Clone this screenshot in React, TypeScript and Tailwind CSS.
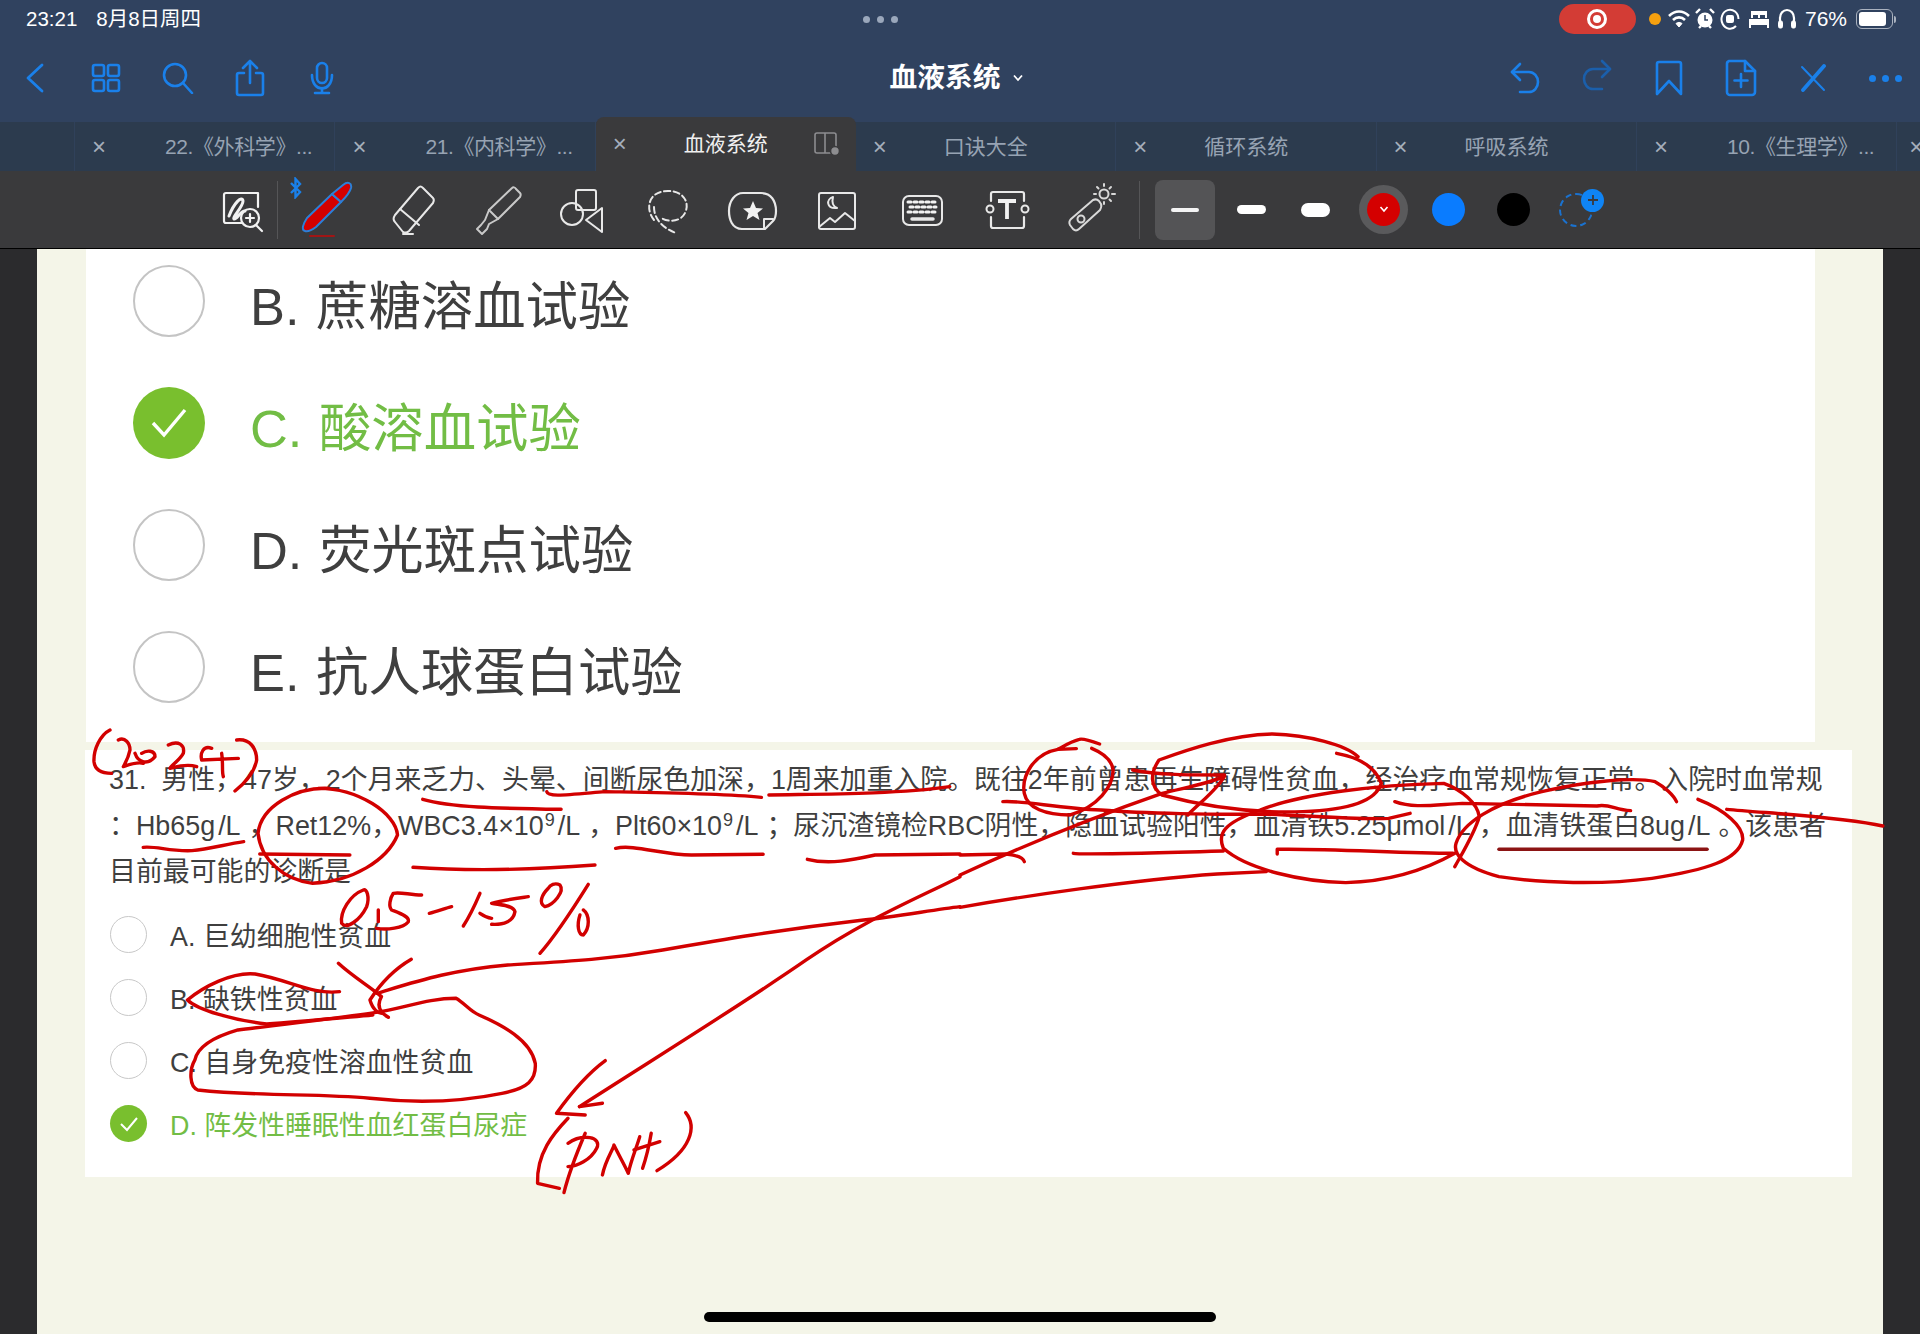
const font = "font-['Liberation_Sans','Noto_Sans_CJK_SC',sans-serif]";

const tabs = [
    { label: "22.《外科学》...", long: true },
    { label: "21.《内科学》...", long: true },
    { label: "血液系统", active: true },
    { label: "口诀大全" },
    { label: "循环系统" },
    { label: "呼吸系统" },
    { label: "10.《生理学》...", long: true },
];

const NavIcon = ({ w, h, children }: { w: number; h: number; children: React.ReactNode }) => (
    <div className="w-[72px] flex items-center justify-center">
        <svg width={w} height={h} viewBox={`0 0 ${w} ${h}`} fill="none" stroke="currentColor" strokeWidth="2.6" strokeLinecap="round" strokeLinejoin="round">
            {children}
        </svg>
    </div>
);

const ToolSlot = ({ children }: { children: React.ReactNode }) => (
    <div className="w-[85px] pt-[2px] flex items-center justify-center">
        <svg width="60" height="60" viewBox="0 0 60 60" fill="none" stroke="#e8e8e8" strokeWidth="2" strokeLinecap="round" strokeLinejoin="round">
            {children}
        </svg>
    </div>
);

const StatusBar = () => (
    <div className="h-[38px] flex items-center justify-between text-white text-[20.5px]">
        <div className="flex gap-[19px] pl-[26px]">
            <span>23:21</span>
            <span>8月8日周四</span>
        </div>
        <div className="flex gap-[7px]">
            <div className="w-[7px] h-[7px] rounded-full bg-[#9aa7bb]"></div>
            <div className="w-[7px] h-[7px] rounded-full bg-[#9aa7bb]"></div>
            <div className="w-[7px] h-[7px] rounded-full bg-[#9aa7bb]"></div>
        </div>
        <div className="flex items-center pr-[24px]">
            <div className="w-[77px] h-[30px] rounded-full bg-[#d33c35] flex items-center justify-center">
                <div className="w-[20px] h-[20px] rounded-full border-[3px] border-white flex items-center justify-center">
                    <div className="w-[8px] h-[8px] rounded-full bg-white"></div>
                </div>
            </div>
            <div className="w-[12px] h-[12px] rounded-full bg-[#f5a00f] ml-[13px]"></div>
            <svg className="ml-[6px]" width="24" height="20" viewBox="0 0 24 20" fill="none" stroke="white" strokeWidth="2.6">
                <path d="M2 7 C8 1,16 1,22 7" />
                <path d="M6 11 C9.5 7.5,14.5 7.5,18 11" />
                <path d="M12 18 L9 14.5 C11 13,13 13,15 14.5 Z" fill="white" strokeWidth="1" />
            </svg>
            <svg className="ml-[3px]" width="22" height="24" viewBox="0 0 22 24">
                <circle cx="11" cy="13" r="7.5" fill="white" />
                <path d="M2 6 L6 2 M20 6 L16 2 M5 21 L7 19 M17 21 L15 19" stroke="white" strokeWidth="2.4" />
                <path d="M11 8 V13 H14" stroke="#2f4260" strokeWidth="1.5" fill="none" />
            </svg>
            <svg className="ml-[4px]" width="20" height="24" viewBox="0 0 20 24" fill="none" stroke="white" strokeWidth="2">
                <path d="M16 19 A8.5 9.5 0 1 1 18.5 12" />
                <rect x="7" y="9" width="6" height="6" rx="1" fill="white" />
            </svg>
            <svg className="ml-[8px]" width="22" height="20" viewBox="0 0 22 20" fill="white">
                <path d="M3 2 H19 V9 H3 Z" />
                <path d="M1 10 H21 V16 H1 Z" />
                <path d="M1 16 H3 V19 H1 Z M19 16 H21 V19 H19 Z" />
                <path d="M5 6 H10 V9 H5 Z M12 6 H17 V9 H12 Z" fill="#2f4260" />
            </svg>
            <svg className="ml-[7px]" width="20" height="22" viewBox="0 0 20 22" fill="none" stroke="white" strokeWidth="2.2">
                <path d="M3 15 V10 A7 8 0 0 1 17 10 V15" />
                <rect x="1.5" y="13" width="4" height="7" rx="1.5" fill="white" strokeWidth="1" />
                <rect x="14.5" y="13" width="4" height="7" rx="1.5" fill="white" strokeWidth="1" />
            </svg>
            <span className="ml-[8px] text-[21px]">76%</span>
            <div className="ml-[9px] w-[37px] h-[20px] rounded-[6px] border border-[#aab2bf] p-[2px]">
                <div className="w-[27px] h-full rounded-[3px] bg-white"></div>
            </div>
            <div className="w-[2px] h-[7px] ml-[1px] rounded-r-full bg-[#aab2bf]"></div>
        </div>
    </div>
);

const NavBar = () => (
    <div className="h-[84px] pb-[4px] grid grid-cols-[1fr_auto_1fr] items-center text-[#1a80ea]">
        <div className="flex">
            <div className="w-[70px] flex items-center justify-center">
                <svg width="20" height="30" viewBox="0 0 20 30" fill="none" stroke="currentColor" strokeWidth="2.8" strokeLinecap="round" strokeLinejoin="round">
                    <path d="M17 2 L3 15 L17 28" />
                </svg>
            </div>
            <NavIcon w={30} h={30}>
                <rect x="2" y="2" width="11" height="11" rx="2" />
                <rect x="17" y="2" width="11" height="11" rx="2" />
                <rect x="2" y="17" width="11" height="11" rx="2" />
                <rect x="17" y="17" width="11" height="11" rx="2" />
            </NavIcon>
            <NavIcon w={32} h={32}>
                <circle cx="13" cy="13" r="11" />
                <path d="M21 21 L30 31" />
            </NavIcon>
            <NavIcon w={30} h={38}>
                <path d="M9 14 H4 A2 2 0 0 0 2 16 V34 A2 2 0 0 0 4 36 H26 A2 2 0 0 0 28 34 V16 A2 2 0 0 0 26 14 H21" />
                <path d="M15 24 V2 M8 9 L15 2 L22 9" />
            </NavIcon>
            <NavIcon w={26} h={34}>
                <rect x="8" y="2" width="10" height="20" rx="5" />
                <path d="M3 14 C3 32,23 32,23 14" />
                <path d="M13 27 V32 M6 32 H20" />
            </NavIcon>
        </div>
        <div className="flex items-center mr-[6px] text-white">
            <span className="text-[27.7px] font-bold">血液系统</span>
            <svg className="ml-[12px]" width="12" height="8" viewBox="0 0 12 8" fill="none" stroke="white" strokeWidth="1.8">
                <path d="M2 1.5 L6 6 L10 1.5" />
            </svg>
        </div>
        <div className="flex justify-end -mr-px">
            <NavIcon w={32} h={32}>
                <path d="M11 2 L3 10 L11 18" />
                <path d="M3 10 H20 A9 10 0 0 1 20 30 H11" />
            </NavIcon>
            <div className="text-[#1b5fab]">
                <NavIcon w={32} h={32}>
                    <path d="M21 2 L29 10 L21 18" />
                    <path d="M29 10 H12 A9 10 0 0 0 12 30 H21" />
                </NavIcon>
            </div>
            <NavIcon w={28} h={36}>
                <path d="M2 34 V4 A2 2 0 0 1 4 2 H24 A2 2 0 0 1 26 4 V34 L14 21 Z" />
            </NavIcon>
            <NavIcon w={32} h={38}>
                <path d="M4 2 H20 L30 12 V33 A3 3 0 0 1 27 36 H5 A3 3 0 0 1 2 33 V5 A3 3 0 0 1 4 2 Z" />
                <path d="M20 2 V12 H30 M16 15 V28 M9.5 21.5 H22.5" />
            </NavIcon>
            <NavIcon w={28} h={28}>
                <path d="M3 3 L25 26" strokeWidth="2" />
                <path d="M25 2 L4 26" strokeWidth="3.8" />
            </NavIcon>
            <div className="w-[72px] flex items-center justify-center gap-[6px]">
                <div className="w-[7px] h-[7px] rounded-full bg-[#1a80ea]"></div>
                <div className="w-[7px] h-[7px] rounded-full bg-[#1a80ea]"></div>
                <div className="w-[7px] h-[7px] rounded-full bg-[#1a80ea]"></div>
            </div>
        </div>
    </div>
);

const TabBar = () => (
    <div className="h-[49px] flex items-end bg-[#2c3b4e] text-[21px] text-[#97a3b3]">
        <div className="w-[75px] h-full shrink-0 border-r border-[#30415a]"></div>
        {tabs.map((tab) => (
            <div
                key={tab.label}
                className={
                    tab.active
                        ? "relative w-[260px] h-[54px] shrink-0 flex items-center rounded-t-[8px] bg-[#3a3a3c] text-[#f0f0f0]"
                        : "w-[260.4px] h-full shrink-0 flex items-center border-r border-[#30415a]"
                }
            >
                <span className="w-[88px] shrink-0 pl-[17px] text-[24px] font-light text-[#a5aebb]">×</span>
                <span className={tab.long ? "ml-[2px] whitespace-nowrap tracking-[-0.4px]" : "flex-1 whitespace-nowrap text-center pr-[88px]"}>{tab.label}</span>
                {tab.active && (
                    <svg className="absolute right-[16px] top-[15px]" width="26" height="24" viewBox="0 0 26 24" fill="none" stroke="#8d8d90" strokeWidth="1.6">
                        <rect x="1" y="1" width="21" height="20" rx="2" />
                        <path d="M11 1 V21" />
                        <circle cx="21" cy="19" r="4.5" fill="#8d8d90" stroke="#3a3a3c" />
                    </svg>
                )}
            </div>
        ))}
        <div className="w-[23px] pl-[12px] overflow-hidden text-[24px] font-light text-[#a5aebb] self-center">×</div>
    </div>
);

const ToolBar = () => (
    <div className="h-[78px] pl-[213px] flex items-center bg-[#3a3a3c] border-b border-black">
        <div className="w-[60px] pt-[2px] flex justify-center">
            <svg width="46" height="44" viewBox="0 0 46 44" fill="none" stroke="#f2f2f2" strokeWidth="2.2" strokeLinecap="round" strokeLinejoin="round">
                <path d="M22 34 H6 A2 2 0 0 1 4 32 V6 A2 2 0 0 1 6 4 H38 V18" />
                <path d="M9 27 C14 14,22 6,23 12 C23 18,12 28,14 30 C17 31,20 22,25 22" strokeWidth="3" />
                <circle cx="30" cy="29" r="9" />
                <path d="M30 25 V33 M26 29 H34" />
                <path d="M36 36 L42 42" />
            </svg>
        </div>
        <div className="ml-[4px] w-px h-[58px] bg-[#555557]"></div>
        <div className="ml-[7px] flex relative">
            <svg className="absolute left-[4px] -top-[2px]" width="14" height="22" viewBox="0 0 14 22" fill="none" stroke="#1a80ea" strokeWidth="2.4">
                <path d="M2 6 L11 15 L6.5 20 V2 L11 7 L2 16" />
            </svg>
            <ToolSlot>
                <g transform="translate(0 -1)">
                    <path d="M7 51 C3 50,5 44,9 38 L34 14 L43 22 L18 47 C14 50,10 52,7 51 Z" fill="#d40000" stroke="#2b7fd8" />
                    <path d="M34 14 L45 5 C50 1,54 3,53 8 C52 12,48 17,43 22 Z" fill="#d40000" stroke="#2b7fd8" />
                    <path d="M12 56 H36" stroke="#a01515" />
                </g>
            </ToolSlot>
            <ToolSlot>
                <path d="M35 7 L12 34 C10 37,10 39,12 41 L20 51 C22 52,24 52,26 50 L50 22 C51 20,51 18,50 17 L40 7 C38 5,37 5,35 7 Z" />
                <path d="M17 28 L36 44" />
                <path d="M20 53 H30" />
            </ToolSlot>
            <ToolSlot>
                <path d="M44 7 L21 29 L30 38 L52 16 C53 14,53 13,52 12 L48 8 C47 6,45 6,44 7 Z" stroke="#c9c9c9" />
                <path d="M21 29 L17 39 L13 44 L9 48 L14 53 L19 48 L21 43 L30 38" stroke="#c9c9c9" />
            </ToolSlot>
            <ToolSlot>
                <rect x="23" y="9" width="20" height="20" rx="2" />
                <circle cx="19" cy="33" r="11" />
                <path d="M49 27 V51 L33 39 Z" />
            </ToolSlot>
            <ToolSlot>
                <path d="M16 39 C7 28,10 10,30 10 C46 10,52 22,47 32 C42 42,28 41,22 36" strokeDasharray="6 3.5" />
                <path d="M16 26 C16 36,22 46,38 52" strokeDasharray="6 3.5" />
            </ToolSlot>
            <ToolSlot>
                <path d="M38 48 H19 C9 48,6 38,6 30 C6 20,12 12,20 12 H38 C48 12,53 20,53 30 C53 36,52 38,50 40 L42 48 Z" strokeWidth="2.2" />
                <path d="M50 38 H41 V47" />
                <path d="M30 20 L33 27 L40 27.5 L34.5 32 L36.5 39 L30 35 L23.5 39 L25.5 32 L20 27.5 L27 27 Z" fill="#f2f2f2" stroke="none" />
            </ToolSlot>
            <ToolSlot>
                <rect x="11" y="12" width="36" height="36" rx="2" />
                <path d="M11 46 L22 37 L27 41 L37 32 L47 40" />
                <path d="M25 16 C18 18,18 28,29 27 C24 25,24 20,25 16 Z" />
            </ToolSlot>
            <ToolSlot>
                <rect x="10" y="15" width="39" height="29" rx="6" />
                <path d="M15 21 H44 M17 26 H43 M15 31 H44" stroke="#f2f2f2" strokeWidth="3" strokeDasharray="3 3" />
                <path d="M19 38 H40" strokeWidth="3.5" />
            </ToolSlot>
            <ToolSlot>
                <path d="M13 20 V13 C13 12,14 11,15 11 H44 C45 11,46 12,46 13 V20 M13 36 V45 C13 46,14 47,15 47 H44 C45 47,46 46,46 45 V36" strokeWidth="2.2" />
                <circle cx="12" cy="28" r="3.5" />
                <circle cx="47" cy="28" r="3.5" />
                <path d="M20 20 H38 M29 20 V38" strokeWidth="3.8" stroke="#f2f2f2" strokeLinecap="butt" />
            </ToolSlot>
            <ToolSlot>
                <path d="M8 38 L30 19 C32 18,34 18,36 20 L38 23 C39 25,38 27,37 29 L16 48 C14 50,12 50,10 48 L7 44 C6 42,6 40,8 38 Z" stroke="#d8d8d8" />
                <circle cx="18" cy="38" r="3.5" stroke="#d8d8d8" />
                <circle cx="41" cy="13" r="4.5" stroke="#d8d8d8" />
                <path d="M41 3 V5 M41 21 V23 M31 13 H33 M49 13 H52 M34 6 L35.5 7.5 M48 6 L46.5 7.5 M48 20 L46.5 18.5" stroke="#d8d8d8" />
            </ToolSlot>
        </div>
        <div className="ml-[4px] w-px h-[58px] bg-[#555557]"></div>
        <div className="ml-[15px] w-[60px] h-[60px] rounded-[8px] bg-[#545456] flex items-center justify-center">
            <div className="w-[28px] h-[4px] rounded-full bg-[#f4f4f4]"></div>
        </div>
        <div className="w-[72px] flex justify-center">
            <div className="w-[29px] h-[9px] rounded-full bg-white"></div>
        </div>
        <div className="w-[56px] flex justify-center">
            <div className="w-[29px] h-[14px] rounded-full bg-white"></div>
        </div>
        <div className="ml-[16px] w-[49px] h-[49px] rounded-full bg-[#5a5a5c] flex items-center justify-center">
            <div className="w-[33px] h-[33px] rounded-full bg-[#d40000] flex items-center justify-center">
                <svg width="10" height="7" viewBox="0 0 10 7" fill="none" stroke="white" strokeWidth="1.6">
                    <path d="M1.5 1 L5 5 L8.5 1" />
                </svg>
            </div>
        </div>
        <div className="ml-[24px] w-[33px] h-[33px] rounded-full bg-[#0a7cff]"></div>
        <div className="ml-[32px] w-[33px] h-[33px] rounded-full bg-black"></div>
        <div className="ml-[29px] relative w-[34px] h-[34px] rounded-full border-2 border-dashed border-[#1a72d0]">
            <div className="absolute -right-[13px] -top-[6px] w-[23px] h-[23px] rounded-full bg-[#0f84f5] flex items-center justify-center">
                <svg width="12" height="12" viewBox="0 0 12 12" stroke="#3a3a3c" strokeWidth="1.8">
                    <path d="M6 1 V11 M1 6 H11" />
                </svg>
            </div>
        </div>
    </div>
);

const BigOption = ({ text, checked }: { text: string; checked?: boolean }) => (
    <div className="h-[122px] flex items-center pl-[47px]">
        {checked ? (
            <div className="w-[72px] h-[72px] rounded-full bg-[#79bf2e] flex items-center justify-center">
                <svg width="44" height="36" viewBox="0 0 44 36" fill="none" stroke="white" strokeWidth="3.4">
                    <path d="M6 18 L17 30 L38 5" />
                </svg>
            </div>
        ) : (
            <div className="w-[72px] h-[72px] rounded-full border-2 border-[#c4c4c4]"></div>
        )}
        <span className={`ml-[45px] pt-[13px] text-[52.4px] leading-none [word-spacing:2px] ${checked ? "text-[#72bd45]" : "text-[#3f3f3f]"}`}>{text}</span>
    </div>
);

const SmallOption = ({ text, checked }: { text: string; checked?: boolean }) => (
    <div className="h-[63px] flex items-center pl-[25px]">
        {checked ? (
            <div className="w-[37px] h-[37px] rounded-full bg-[#79bf2e] flex items-center justify-center">
                <svg width="22" height="18" viewBox="0 0 22 18" fill="none" stroke="white" strokeWidth="2">
                    <path d="M3 9 L9 15 L19 3" />
                </svg>
            </div>
        ) : (
            <div className="w-[37px] h-[37px] rounded-full border-[1.5px] border-[#c8c8c8]"></div>
        )}
        <span className={`ml-[23px] pt-[6px] text-[26.9px] leading-none ${checked ? "text-[#72bd45]" : "text-[#3f3f3f]"}`}>{text}</span>
    </div>
);

// the "/L" of a unit sits looser than the rest of the line in the source
const PerLitre = () => <span className="pl-[3px] pr-[8px]">/L</span>;

const Sup9 = () => <sup className="text-[18px] pl-[1px]">9</sup>;

const inkCloseUp = [
    "M90 15 C60 30,40 75,42 110 C45 140,70 145,95 145",
    "M115 45 C135 35,150 55,150 75 C145 100,135 115,130 125 C150 118,170 110,190 115",
    "M165 85 C175 115,205 120,225 95 C225 75,200 75,185 85",
    "M265 60 C295 45,315 60,310 85 C300 105,275 120,270 130 C290 125,320 115,350 125",
    "M395 70 C370 60,360 85,365 105 L475 100 M425 85 C430 115,425 140,430 155",
    "M470 45 C510 40,530 70,530 105 C525 135,500 170,465 198",
    "M850 495 C810 510,780 560,785 595 C800 615,840 585,860 545 C870 515,860 490,850 495",
    "M895 555 L895 590",
    "M1025 510 C990 510,960 500,940 505 C930 520,925 545,935 555 C960 565,990 575,985 590 C970 610,920 615,890 610",
    "M1048 565 C1070 560,1095 550,1115 545",
    "M1200 505 C1185 540,1165 580,1150 603",
    "M1200 565 C1210 572,1220 578,1235 580",
    "M1345 515 C1310 520,1270 525,1235 535 C1260 540,1300 540,1305 560 C1300 590,1270 600,1235 598",
    "M1405 490 C1385 510,1375 535,1395 545 C1420 540,1455 500,1440 480 C1425 472,1410 480,1405 490",
    "M1525 478 C1480 550,1420 640,1380 685",
    "M1500 570 C1490 600,1495 630,1510 630 C1530 610,1530 570,1510 555",
];

const inkLeft = [
    "M632 238 C680 262,760 265,873 268",
    "M848 215 C850 232,880 225,950 215 C1050 218,1150 220,1222 232",
    "M1235 225 C1300 222,1450 225,1550 200",
    "M145 382 C170 378,190 395,230 392 C260 388,290 372,320 365",
    "M348 402 L505 405",
    "M615 442 C700 452,820 450,932 435",
    "M968 385 C1000 372,1050 405,1100 405 L1225 403",
    "M1302 418 C1340 435,1380 420,1420 405 L1568 402",
    "M470 205 C410 200,350 260,345 340 C350 420,390 480,440 490 C510 485,570 420,588 345 C585 280,520 205,450 205",
    "M485 730 C510 770,540 800,560 830 C550 860,560 880,572 892",
    "M612 718 C580 750,555 800,540 840 C545 870,555 880,560 880",
    "M552 820 C620 785,680 750,780 735 C880 725,950 720,1050 690 C1150 660,1250 630,1400 600 C1450 592,1520 570,1568 560",
    "M487 815 C440 825,400 780,340 762 C300 755,250 800,222 840 C240 870,300 900,360 912 C420 905,480 895,545 885",
    "M548 878 C600 865,640 835,690 835 C705 850,715 875,730 885 C770 915,820 960,828 1030 C830 1080,815 1105,770 1120 C700 1145,620 1150,540 1135 C450 1120,350 1130,240 1110 C225 1100,225 1050,235 1020 C240 980,270 950,310 930 C380 915,480 895,548 878",
    "M1568 470 C1500 530,1400 600,1300 720 C1200 840,1050 1000,905 1160",
    "M950 1022 C920 1060,890 1120,865 1180 L915 1185 M905 1160 L945 1150",
    "M885 1195 C860 1240,830 1300,832 1390 L870 1405",
    "M915 1240 C900 1300,885 1370,878 1418 M885 1270 C910 1240,945 1250,935 1285 C925 1320,900 1340,885 1340",
    "M945 1365 C950 1320,965 1285,965 1275 C975 1310,985 1340,990 1360 C995 1320,1005 1280,1010 1250",
    "M1030 1240 C1025 1290,1020 1320,1015 1345 M1000 1290 L1045 1265",
    "M1090 1178 C1110 1220,1100 1290,1040 1352",
];

const inkRight = [
    "M0 405 L75 402 C90 405,103 412,105 425",
    "M0 562 C100 530,280 480,420 462 L500 455",
    "M228 72 C210 60,200 55,195 58 C180 65,170 78,160 88 L190 86",
    "M160 88 C120 100,100 170,105 220 C110 265,140 285,180 285 C225 260,250 200,250 150 C248 120,235 100,215 85",
    "M615 100 C660 115,680 150,688 190 C680 240,640 270,560 275 C480 280,400 260,330 225 C310 200,310 160,325 120 C370 90,440 45,510 42 C570 45,630 75,650 110",
    "M70 245 C100 240,160 265,230 270 C300 280,420 285,490 282 C550 285,650 300,700 295 L735 280",
    "M282 150 C320 165,380 165,432 165",
    "M432 168 C420 210,390 250,372 285",
    "M0 465 C100 380,220 290,330 220 C360 205,400 195,430 170",
    "M808 400 C760 450,700 485,630 488 C560 485,470 450,430 385 C420 340,430 310,490 270 C560 220,680 195,790 190 C820 210,845 250,848 290 C840 340,820 400,808 440",
    "M1205 238 C1250 270,1280 320,1278 360 C1270 420,1220 450,1130 475 C1050 495,950 490,880 470 C820 440,805 400,810 370 C820 310,870 250,950 215 C1020 185,1100 170,1135 185 C1150 200,1165 225,1170 245",
    "M710 245 C740 265,770 255,820 250 L1040 258 C1060 250,1070 270,1095 272",
    "M1252 268 C1320 280,1440 290,1507 318",
    "M185 400 C200 405,300 400,430 393",
    "M518 402 L518 388 C600 385,720 400,805 400",
];

// hand-written pen strokes, in the coordinates of the reference crops
const Ink = () => (
    <svg className="absolute left-0 top-0" width="1920" height="1334" fill="none" stroke="#d20000" strokeWidth="3.4" strokeLinecap="round" strokeLinejoin="round">
        <g transform="translate(80 725) scale(0.3333)">
            {inkCloseUp.map((d) => (
                <path key={d} d={d} vectorEffect="non-scaling-stroke" />
            ))}
        </g>
        <g transform="translate(60 720) scale(0.574 0.3333)">
            {inkLeft.map((d) => (
                <path key={d} d={d} vectorEffect="non-scaling-stroke" />
            ))}
        </g>
        <g transform="translate(960 720) scale(0.6124 0.3333)">
            {inkRight.map((d) => (
                <path key={d} d={d} vectorEffect="non-scaling-stroke" />
            ))}
            <path d="M880 388 L1220 388" stroke="#8c1414" vectorEffect="non-scaling-stroke" />
        </g>
    </svg>
);

const App = () => {
    return (
        <div className={`relative w-[1920px] h-[1334px] overflow-hidden flex flex-col bg-[#2b2b2d] ${font}`}>
            <div className="bg-[#30425f]">
                <StatusBar />
                <NavBar />
            </div>
            <TabBar />
            <ToolBar />

            <div className="flex-1 ml-[37px] w-[1846px] bg-[#f4f5e8] overflow-hidden">
                <div className="ml-[49px] w-[1729px] h-[493px] bg-white overflow-hidden">
                    <div className="-mt-[9px]">
                        <BigOption text="B. 蔗糖溶血试验" />
                        <BigOption text="C. 酸溶血试验" checked />
                        <BigOption text="D. 荧光斑点试验" />
                        <BigOption text="E. 抗人球蛋白试验" />
                    </div>
                </div>
                <div className="mt-[8px] ml-[48px] w-[1767px] h-[427px] bg-white pt-[7px]">
                    <div className="pl-[24px] text-[26.9px] leading-[46px] text-[#3f3f3f] whitespace-nowrap">
                        <div>31. &nbsp;男性，47岁，2个月来乏力、头晕、间断尿色加深，1周来加重入院。既往2年前曾患再生障碍性贫血，经治疗血常规恢复正常。入院时血常规</div>
                        <div>：Hb65g<PerLitre />，Ret12%，WBC3.4×10<Sup9 /><PerLitre />，Plt60×10<Sup9 /><PerLitre />；尿沉渣镜检RBC阴性，隐血试验阳性，血清铁5.25μmol<PerLitre />，血清铁蛋白8ug<PerLitre />。该患者</div>
                        <div>目前最可能的诊断是</div>
                    </div>
                    <div className="mt-[8px]">
                        <SmallOption text="A. 巨幼细胞性贫血" />
                        <SmallOption text="B. 缺铁性贫血" />
                        <SmallOption text="C. 自身免疫性溶血性贫血" />
                        <SmallOption text="D. 阵发性睡眠性血红蛋白尿症" checked />
                    </div>
                </div>
            </div>

            <Ink />
            <div className="absolute left-[704px] top-[1312px] w-[512px] h-[10px] rounded-full bg-black"></div>
        </div>
    );
};

export default App;
